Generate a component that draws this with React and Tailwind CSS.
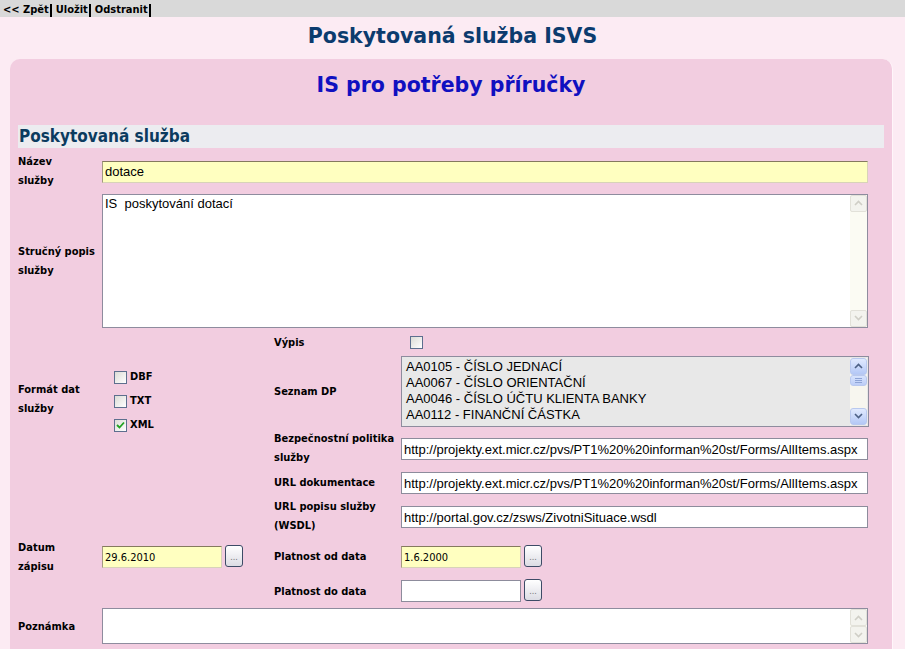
import React from 'react';

const tah = "font-['DejaVu_Sans_Condensed','DejaVu_Sans',sans-serif]";
const wide = "font-['DejaVu_Sans',Verdana,sans-serif]";
const arial = "font-['Liberation_Sans',Arial,sans-serif]";
const lbl = `${tah} whitespace-nowrap text-[11px] font-bold leading-[19px] text-black`;

function Chevron({ up }) {
  return (
    <svg width="9" height="6" viewBox="0 0 9 6" aria-hidden="true">
      <path
        d={up ? 'M1 5 L4.5 1.5 L8 5' : 'M1 1 L4.5 4.5 L8 1'}
        fill="none"
        stroke="currentColor"
        strokeWidth="1.6"
      />
    </svg>
  );
}

// greyed out XP scrollbar used by the textareas
function DisabledScroll() {
  return (
    <div className="flex w-[17px] shrink-0 flex-col justify-between bg-[#fbfbf3]">
      <div className="flex h-[17px] items-center justify-center rounded-[2px] border border-[#e2e1d9] bg-[#f3f3ee] text-[#cfcec6]">
        <Chevron up />
      </div>
      <div className="flex h-[17px] items-center justify-center rounded-[2px] border border-[#e2e1d9] bg-[#f3f3ee] text-[#cfcec6]">
        <Chevron />
      </div>
    </div>
  );
}

function ListScroll() {
  return (
    <div className="flex w-[17px] shrink-0 flex-col bg-[#f7f6ef]">
      <div className="flex h-[17px] items-center justify-center rounded-[3px] border border-[#b9c9ef] bg-gradient-to-b from-[#e1eafe] to-[#b4c8f6] text-[#4d6185]">
        <Chevron up />
      </div>
      <div className="flex h-[11px] flex-col items-center justify-center gap-[1px] rounded-[3px] border border-[#b9c9ef] bg-gradient-to-b from-[#d8e4fd] to-[#bccdf7]">
        <span className="h-px w-[7px] bg-[#8ea4d6]" />
        <span className="h-px w-[7px] bg-[#8ea4d6]" />
        <span className="h-px w-[7px] bg-[#8ea4d6]" />
      </div>
      <div className="flex-1" />
      <div className="flex h-[17px] items-center justify-center rounded-[3px] border border-[#b9c9ef] bg-gradient-to-b from-[#e1eafe] to-[#b4c8f6] text-[#4d6185]">
        <Chevron />
      </div>
    </div>
  );
}

function Check({ checked }) {
  return (
    <span className="flex h-[13px] w-[13px] shrink-0 items-center justify-center border border-[#5d6f8e] bg-gradient-to-br from-[#dcdcd6] to-white">
      {checked && (
        <svg width="9" height="8" viewBox="0 0 9 8" aria-hidden="true">
          <path d="M1 4 L3.5 6.5 L8 1.5" fill="none" stroke="#21a121" strokeWidth="1.8" />
        </svg>
      )}
    </span>
  );
}

function DotsButton() {
  return (
    <button
      type="button"
      className={`${tah} flex h-[22px] w-[18px] shrink-0 items-center justify-center rounded-[3px] border border-[#3d4b66] bg-gradient-to-b from-white to-[#dcdce4] pt-[3px] text-[9px] leading-none text-[#777]`}
    >
      ...
    </button>
  );
}

function TextField({ value, yellow, className = '', font = arial, size = 'text-[13px]' }) {
  return (
    <input
      type="text"
      readOnly
      defaultValue={value}
      className={`${font} ${size} h-[22px] border px-[2px] text-black outline-none ${
        yellow
          ? 'border-[#d8d3b8] border-t-[#857a5e] border-l-[#a39a80] bg-[#ffffc0]'
          : 'border-[#8d8c9c] bg-white'
      } ${className}`}
    />
  );
}

function TextArea({ text, height }) {
  return (
    <div className={`flex ${height} w-full border border-[#8e8c9e] bg-white`}>
      <div className={`${arial} flex-1 whitespace-pre px-[2px] pt-[1px] text-[13px] leading-[16px] text-black`}>
        {text}
      </div>
      <DisabledScroll />
    </div>
  );
}

const dpItems = [
  'AA0105 - ČÍSLO JEDNACÍ',
  'AA0067 - ČÍSLO ORIENTAČNÍ',
  'AA0046 - ČÍSLO ÚČTU KLIENTA BANKY',
  'AA0112 - FINANČNÍ ČÁSTKA',
];

const docUrl = 'http://projekty.ext.micr.cz/pvs/PT1%20%20informan%20st/Forms/AllItems.aspx';

export default function App() {
  return (
    <div className="h-[649px] w-full overflow-hidden bg-[#fcebf3]">
      {/* toolbar */}
      <div className={`${tah} flex h-[17px] items-end bg-[#d9d9d9] pl-[3px] text-[11px] font-bold text-black`}>
        <span className="h-[13px] border-r-2 border-black pr-[1px] leading-[12px]">&lt;&lt; Zpět</span>
        <span className="h-[13px] border-r-2 border-black pl-[4px] pr-[1px] leading-[12px]">Uložit</span>
        <span className="h-[13px] border-r-2 border-black pl-[4px] pr-[1px] leading-[12px]">Odstranit</span>
      </div>

      <h1 className={`${wide} mt-[7px] text-center text-[20.5px] font-bold leading-[24px] text-[#0b3b6e]`}>
        Poskytovaná služba ISVS
      </h1>

      <div className="mt-[11px] ml-[10px] w-[883px] rounded-t-[10px] border-r border-[#fff6fa] bg-[#f2cde0] pb-[40px]">
        <h2 className={`${wide} pt-[14px] pb-[28px] text-center text-[20.5px] font-bold leading-[24px] text-[#1010c0]`}>
          IS pro potřeby příručky
        </h2>

        <div className="ml-[8px] mr-[8px] h-[23px] bg-[#ececf0]">
          <h3 className={`${tah} pl-[1px] text-[17px] font-bold leading-[23px] text-[#0b3b5f]`}>
            Poskytovaná služba
          </h3>
        </div>

        <div className="ml-[8px] mt-[3px] grid grid-cols-[84px_172px_127px_467px] grid-rows-[39px_141px_22px_76px_38px_30px_38px_43px_26px_44px] items-center">
          {/* Název */}
          <div className={`${lbl} col-start-1 row-start-1`}>
            Název
            <br />
            služby
          </div>
          <div className="col-span-3 col-start-2 row-start-1">
            <TextField value="dotace" yellow className="w-[766px]" />
          </div>

          {/* Stručný popis */}
          <div className={`${lbl} col-start-1 row-start-2`}>
            Stručný popis
            <br />
            služby
          </div>
          <div className="col-span-3 col-start-2 row-start-2">
            <TextArea text="IS  poskytování dotací" height="h-[134px]" />
          </div>

          {/* Formát dat */}
          <div className={`${lbl} col-start-1 row-span-3 row-start-3`}>
            Formát dat
            <br />
            služby
          </div>
          <div className="col-start-2 row-span-3 row-start-3 flex flex-col pl-[12px] pt-[4px]">
            {[
              ['DBF', false],
              ['TXT', false],
              ['XML', true],
            ].map(([name, on]) => (
              <div key={name} className="flex h-[24px] items-center gap-[3px]">
                <Check checked={on} />
                <span className={`${tah} text-[11px] font-bold text-black`}>{name}</span>
              </div>
            ))}
          </div>

          {/* Výpis */}
          <div className={`${lbl} col-start-3 row-start-3`}>Výpis</div>
          <div className="col-start-4 row-start-3 pl-[9px]">
            <Check />
          </div>

          {/* Seznam DP */}
          <div className={`${lbl} col-start-3 row-start-4`}>Seznam DP</div>
          <div className="col-start-4 row-start-4 flex h-[71px] w-[468px] border border-[#8e8c9e] bg-[#e8e8e8] p-px">
            <div className={`${arial} flex-1 pl-[3px] pt-[1px] text-[13px] leading-[16px] text-black`}>
              {dpItems.map((it) => (
                <div key={it}>{it}</div>
              ))}
            </div>
            <ListScroll />
          </div>

          {/* Bezpečnostní politika */}
          <div className={`${lbl} col-start-3 row-start-5`}>
            Bezpečnostní politika
            <br />
            služby
          </div>
          <div className="col-start-4 row-start-5">
            <TextField value={docUrl} className="w-[467px]" />
          </div>

          {/* URL dokumentace */}
          <div className={`${lbl} col-start-3 row-start-6`}>URL dokumentace</div>
          <div className="col-start-4 row-start-6">
            <TextField value={docUrl} className="w-[467px]" />
          </div>

          {/* URL popisu */}
          <div className={`${lbl} col-start-3 row-start-7`}>
            URL popisu služby
            <br />
            (WSDL)
          </div>
          <div className="col-start-4 row-start-7">
            <TextField value="http://portal.gov.cz/zsws/ZivotniSituace.wsdl" className="w-[467px]" />
          </div>

          {/* Datum zápisu / Platnost od */}
          <div className={`${lbl} col-start-1 row-start-8`}>
            Datum
            <br />
            zápisu
          </div>
          <div className="col-start-2 row-start-8 flex items-center gap-[3px] pt-[1px]">
            <TextField value="29.6.2010" yellow font={tah} size="text-[11px]" className="w-[120px]" />
            <div className="mb-[3px]">
              <DotsButton />
            </div>
          </div>
          <div className={`${lbl} col-start-3 row-start-8`}>Platnost od data</div>
          <div className="col-start-4 row-start-8 flex items-center gap-[3px] pt-[1px]">
            <TextField value="1.6.2000" yellow font={tah} size="text-[11px]" className="w-[120px]" />
            <div className="mb-[3px]">
              <DotsButton />
            </div>
          </div>

          {/* Platnost do */}
          <div className={`${lbl} col-start-3 row-start-9`}>Platnost do data</div>
          <div className="col-start-4 row-start-9 flex items-center gap-[3px]">
            <TextField value="" font={tah} size="text-[11px]" className="w-[120px]" />
            <div className="mb-[2px]">
              <DotsButton />
            </div>
          </div>

          {/* Poznámka */}
          <div className={`${lbl} col-start-1 row-start-10`}>Poznámka</div>
          <div className="col-span-3 col-start-2 row-start-10">
            <TextArea text="" height="h-[36px]" />
          </div>
        </div>
      </div>
    </div>
  );
}
